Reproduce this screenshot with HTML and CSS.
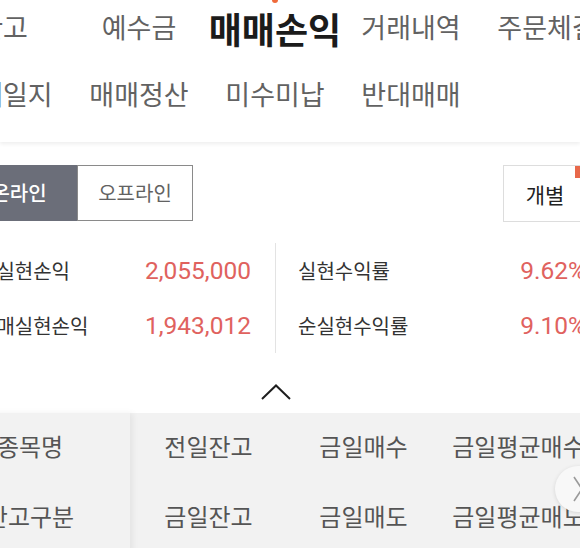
FILE: index.html
```html
<!DOCTYPE html>
<html lang="ko">
<head>
<meta charset="utf-8">
<link rel="stylesheet" href="styles.css">
</head>
<body>
<div class="page">
  <header class="nav">
    <div class="nav-grid">
      <span class="nav-item">잔고</span>
      <span class="nav-item">예수금</span>
      <span class="nav-item active">매매손익</span>
      <span class="nav-item">거래내역</span>
      <span class="nav-item">주문체결</span>
      <span class="nav-item">매매일지</span>
      <span class="nav-item">매매정산</span>
      <span class="nav-item">미수미납</span>
      <span class="nav-item">반대매매</span>
    </div>
  </header>

  <section class="controls">
    <div class="toggle">
      <button class="toggle-btn on">온라인</button>
      <button class="toggle-btn off">오프라인</button>
    </div>
    <button class="mode-btn">개별</button>
  </section>

  <section class="stats">
    <div class="stat-col left">
      <div class="stat-row"><span class="label">총실현손익</span><span class="value">2,055,000</span></div>
      <div class="stat-row"><span class="label">순매실현손익</span><span class="value">1,943,012</span></div>
    </div>
    <div class="stat-col right">
      <div class="stat-row"><span class="label">실현수익률</span><span class="value">9.62%</span></div>
      <div class="stat-row"><span class="label">순실현수익률</span><span class="value">9.10%</span></div>
    </div>
  </section>

  <div class="collapse">
    <svg class="chev-up" width="30" height="16" viewBox="0 0 30 16"><path d="M1 15 L15 1.5 L29 15" fill="none" stroke="#1e1e1e" stroke-width="2"/></svg>
  </div>

  <section class="table">
    <div class="fixed-col">
      <div class="cell">종목명</div>
      <div class="cell">잔고구분</div>
    </div>
    <div class="scroll-cols">
      <div class="cell">전일잔고</div>
      <div class="cell">금일매수</div>
      <div class="cell">금일평균매수</div>
      <div class="cell">금일잔고</div>
      <div class="cell">금일매도</div>
      <div class="cell">금일평균매도</div>
    </div>
    <div class="next-btn">
      <svg width="10" height="26" viewBox="0 0 10 26"><path d="M1 1 L9 13 L1 25" fill="none" stroke="#9a9a9a" stroke-width="1.6"/></svg>
    </div>
  </section>
</div>
</body>
</html>
```

FILE: styles.css
```css
* { box-sizing: border-box; }

html, body {
  margin: 0;
  padding: 0;
  background: #ffffff;
}

body {
  font-family: "Noto Sans CJK KR", "Noto Sans", sans-serif;
  width: 580px;
  height: 548px;
  overflow: hidden;
}

.page {
  position: relative;
  width: 580px;
  height: 548px;
  overflow: hidden;
}

/* header nav */
.nav {
  height: 142px;
  background: #fff;
  box-shadow: 0 2px 4px rgba(0, 0, 0, 0.07);
  position: relative;
  z-index: 2;
}

.nav-grid {
  display: grid;
  grid-template-columns: repeat(5, 136px);
  grid-template-rows: 52px 82px;
  margin-left: -65px;
}

.nav-item {
  display: flex;
  align-items: center;
  justify-content: center;
  font-size: 27px;
  line-height: 1;
  color: #626262;
  white-space: nowrap;
  position: relative;
}

.nav-item.active {
  font-size: 36px;
  font-weight: 700;
  color: #1b1b1b;
  padding-top: 3px;
}

.nav-item.active::before {
  content: "";
  position: absolute;
  top: -3px;
  left: 50%;
  margin-left: -3px;
  width: 6px;
  height: 6px;
  border-radius: 50%;
  background: #ef6a3b;
}

/* controls */
.controls {
  display: flex;
  justify-content: space-between;
  align-items: flex-start;
  margin-top: 23px;
}

.toggle {
  display: flex;
  margin-left: -39px;
}

.toggle-btn {
  width: 116px;
  height: 56px;
  font-family: inherit;
  font-size: 20px;
  line-height: 1;
  border: 1px solid #8a8a8a;
  padding: 0;
  margin: 0;
}

.toggle-btn.on {
  background: #6b6e79;
  border-color: #6b6e79;
  color: #ffffff;
  font-weight: 500;
}

.toggle-btn.off {
  background: #ffffff;
  color: #626262;
}

.mode-btn {
  position: relative;
  width: 84px;
  height: 57px;
  margin-right: -7px;
  background: #fff;
  border: 1px solid #dddddd;
  font-family: inherit;
  font-size: 21px;
  color: #222;
  padding: 0;
}

.mode-btn::after {
  content: "";
  position: absolute;
  top: 0;
  right: 0;
  width: 11px;
  height: 12px;
  background: #e8684a;
}

/* stats */
.stats {
  display: flex;
  margin-top: 21px;
  margin-left: -22px;
}

.stat-col {
  flex: none;
}

.stat-col.left {
  width: 297px;
  padding-right: 24px;
}

.stat-col.right {
  width: 333px;
  padding: 0 22px 0 22px;
  border-left: 1px solid #e3e3e3;
}

.stat-row {
  height: 55px;
  display: flex;
  align-items: center;
  justify-content: space-between;
}

.label {
  font-size: 20px;
  color: #333333;
  white-space: nowrap;
}

.value {
  font-family: Roboto, "Liberation Sans", sans-serif;
  font-size: 24.5px;
  color: #e0625e;
  white-space: nowrap;
}

/* collapse */
.collapse {
  height: 60px;
  display: flex;
  align-items: flex-start;
  padding-top: 31px;
  padding-left: 261px;
}

.chev-up {
  display: block;
}

/* table */
.table {
  position: relative;
  display: flex;
  background: #f2f2f2;
  height: 140px;
}

.fixed-col {
  flex: none;
  width: 200px;
  margin-left: -70px;
  background: #f2f2f2;
  box-shadow: 3px 0 6px rgba(0, 0, 0, 0.06);
  position: relative;
  z-index: 1;
}

.scroll-cols {
  flex: none;
  display: grid;
  grid-template-columns: repeat(3, 155px);
  grid-auto-rows: 70px;
  margin-left: 1px;
}

.cell {
  height: 70px;
  display: flex;
  align-items: center;
  justify-content: center;
  font-size: 24px;
  color: #555555;
  white-space: nowrap;
  padding-bottom: 6px;
}

.next-btn {
  position: absolute;
  left: 555px;
  top: 53px;
  width: 46px;
  height: 46px;
  border-radius: 50%;
  background: #f8f8f8;
  box-shadow: 0 1px 4px rgba(0, 0, 0, 0.12);
  display: flex;
  align-items: center;
  padding-left: 18px;
}

.next-btn svg {
  display: block;
}
```
